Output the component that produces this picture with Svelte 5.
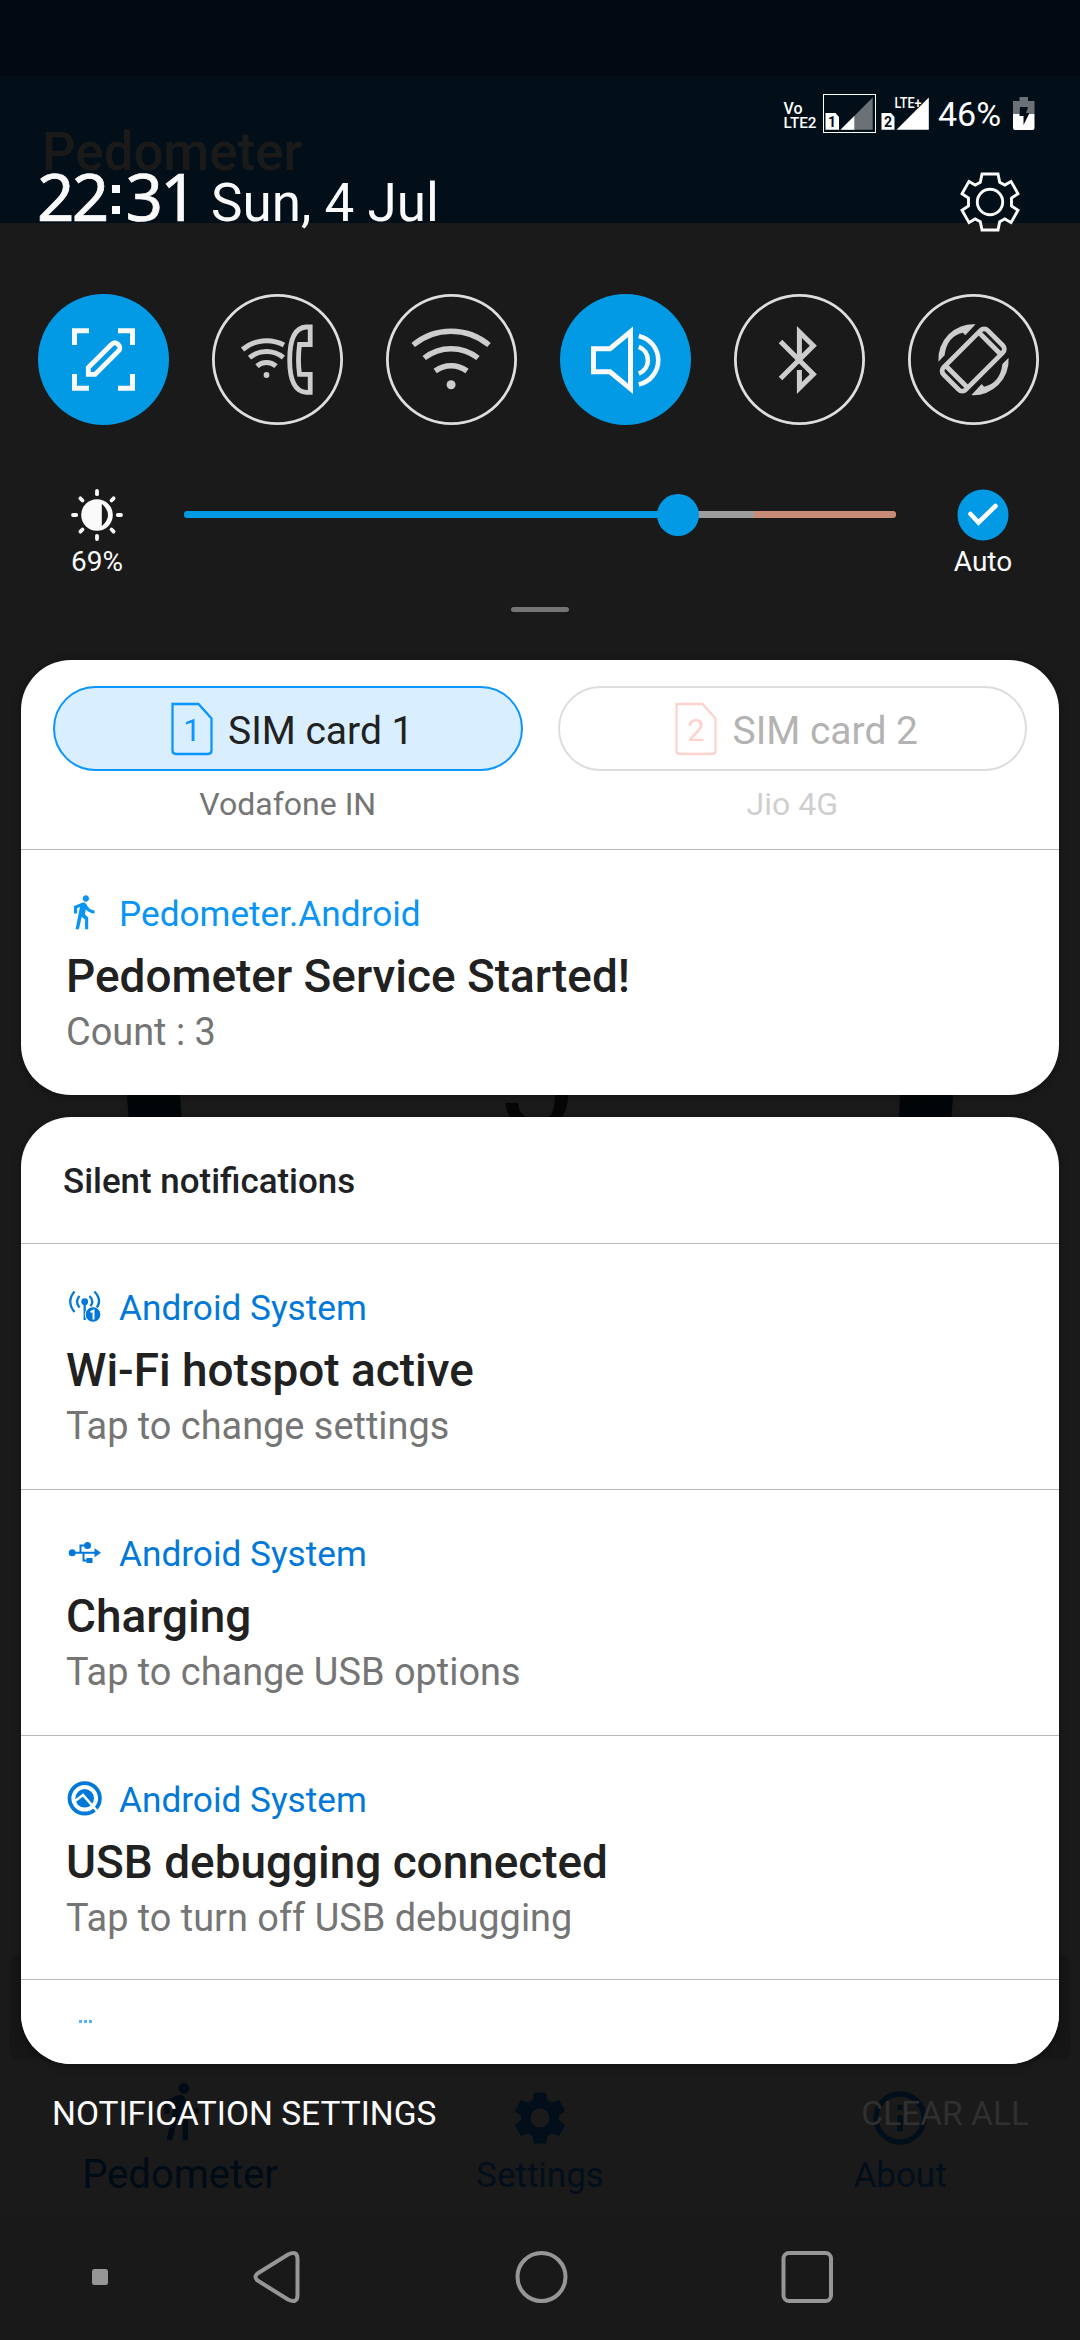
<script>
  const tiles = [
    { id: 'capture', on: true },
    { id: 'wificall', on: false },
    { id: 'wifi', on: false },
    { id: 'sound', on: true },
    { id: 'bluetooth', on: false },
    { id: 'rotate', on: false }
  ];
  const sims = [
    { n: 1, label: 'SIM card 1', carrier: 'Vodafone IN', active: true },
    { n: 2, label: 'SIM card 2', carrier: 'Jio 4G', active: false }
  ];
  const silent = [
    { icon: 'hotspot', app: 'Android System', title: 'Wi-Fi hotspot active', text: 'Tap to change settings' },
    { icon: 'usb', app: 'Android System', title: 'Charging', text: 'Tap to change USB options' },
    { icon: 'debug', app: 'Android System', title: 'USB debugging connected', text: 'Tap to turn off USB debugging' }
  ];
  const gear = 'M-8 -28H8L9.7 -19.6L14.8 -17L21 -20.6L28 -8.3L21.5 -4V4L28 8.3L21 20.6L14.8 17L9.7 19.6L8 28H-8L-9.7 19.6L-14.8 17L-21 20.6L-28 8.3L-21.5 4V-4L-28 -8.3L-21 -20.6L-14.8 -17L-9.7 -19.6Z';
</script>

{#snippet walker()}
  <path d="M13.5 5.5c1.1 0 2-.9 2-2s-.9-2-2-2-2 .9-2 2 .9 2 2 2zM9.8 8.9L7 23h2.100l1.800-8 2.100 2v6h2v-7.500l-2.100-2 .6-3C14.800 12 16.800 13 19 13v-2c-1.900 0-3.500-1-4.300-2.400l-1-1.600c-.4-.6-1-1-1.700-1-.3 0-.5.1-.8.1L6 8.300V13h2V9.600l1.800-.7" />
{/snippet}

{#snippet notification(icon, app, title, text)}
  <article class="note">
    <div class="app">
      <svg class="app-icon" viewBox="0 0 40 40" width="40" height="40">
        {#if icon === 'walk'}
          <g fill="currentColor" transform="translate(-1.500 -1) scale(1.580)">{@render walker()}</g>
        {:else if icon === 'hotspot'}
          <g fill="none" stroke="currentColor" stroke-width="2.300">
            <path d="M8.500 3.500Q0 13.500 8.500 24M13.500 8Q8.500 13.500 13.500 19.500M28.500 3.500Q37 13 29.500 21M23.500 8Q28.500 12.500 24.500 18.500" />
            <path d="M18.700 14V32" />
          </g>
          <circle cx="18.700" cy="13.700" r="3.400" fill="currentColor" />
          <circle cx="27" cy="26.500" r="7.800" fill="currentColor" stroke="#fff" stroke-width="1" />
          <path d="M24.500 24.200l3-1.500V31.500" fill="none" stroke="#fff" stroke-width="2" />
        {:else if icon === 'usb'}
          <g fill="none" stroke="currentColor" stroke-width="2">
            <path d="M6 18.700H30M14.500 18.700V11.500H22M17.500 18.700V26.500H24" />
          </g>
          <circle cx="6.200" cy="18.700" r="3.500" fill="currentColor" />
          <circle cx="21.500" cy="11.500" r="3.500" fill="currentColor" />
          <path d="M28.500 14.200V23.200L35 18.700ZM20.500 24H26.500V29H20.500Z" fill="currentColor" />
        {:else}
          <circle cx="18.700" cy="18.300" r="15.200" fill="none" stroke="currentColor" stroke-width="3.800" />
          <circle cx="18.700" cy="18.300" r="9.300" fill="currentColor" />
          <path d="M8.500 21.500L17 15L31 31" fill="none" stroke="#fff" stroke-width="2.600" />
        {/if}
      </svg>
      <span>{app}</span>
    </div>
    <h2>{title}</h2>
    <p>{text}</p>
  </article>
{/snippet}

<div class="phone">
  <div class="behind">
    <div class="b-status"></div>
    <div class="b-toolbar"><span>Pedometer</span></div>
    <svg class="b-dial" viewBox="0 0 1080 22" width="1080" height="22">
      <path d="M127 0H180L181.500 22H128.500ZM900 0H953L951.500 22H899Z" fill="#030608" />
      <path d="M505.500 8H518Q518 17 526 22H510Q505.500 16 505.500 8ZM555 0H568Q568 14 562 22H549Q555 17 555 0Z" fill="#060606" />
    </svg>
    <div class="b-snack"></div>
    <div class="b-tabs">
      <div class="b-tab current">
        <svg viewBox="0 0 24 24" width="64" height="64" fill="currentColor">{@render walker()}</svg>
        <span>Pedometer</span>
      </div>
      <div class="b-tab">
        <svg viewBox="0 0 24 24" width="64" height="64" fill="currentColor">
          <path d="M19.140 12.940c.04-.3.060-.61.060-.94s-.020-.64-.070-.94l2.030-1.580c.18-.14.230-.41.120-.61l-1.920-3.320c-.12-.22-.37-.29-.59-.22l-2.390.96c-.5-.38-1.030-.7-1.620-.94l-.36-2.540A.48.48 0 0 0 13.920 2.400h-3.840c-.24 0-.43.17-.47.41l-.36 2.540c-.59.24-1.130.57-1.620.94l-2.390-.96c-.22-.08-.47 0-.59.22L2.740 8.870c-.12.21-.8.470.12.610l2.030 1.580c-.05.3-.09.63-.09.940s.02.640.07.940l-2.030 1.580c-.18.14-.23.410-.12.610l1.920 3.320c.12.220.370.290.590.220l2.390-.96c.5.380 1.030.700 1.620.940l.36 2.540c.05.240.240.410.480.410h3.840c.240 0 .440-.170.470-.410l.360-2.540c.590-.240 1.130-.560 1.620-.940l2.390.960c.220.080.470 0 .590-.220l1.920-3.320c.120-.220.070-.470-.120-.610zM12 15.600A3.600 3.600 0 1 1 12 8.400a3.600 3.600 0 0 1 0 7.200z" />
        </svg>
        <span>Settings</span>
      </div>
      <div class="b-tab">
        <svg viewBox="0 0 24 24" width="64" height="64" fill="currentColor">
          <path d="M11 7h2v2h-2zM11 11h2v6h-2zM12 2a10 10 0 1 0 0 20 10 10 0 0 0 0-20zm0 18a8 8 0 1 1 0-16 8 8 0 0 1 0 16z" />
        </svg>
        <span>About</span>
      </div>
    </div>
  </div>

  <div class="shade">
    <div class="status">
      <svg viewBox="783 94 148 40" width="148" height="40" class="signal">
        <text x="783.500" y="113.500" font-size="16.500" textLength="19" lengthAdjust="spacingAndGlyphs">Vo</text>
        <text x="783.500" y="128" font-size="15.500" textLength="33" lengthAdjust="spacingAndGlyphs">LTE2</text>
        <rect x="823.500" y="94.500" width="52" height="38" fill="none" stroke="#fff" />
        <path d="M825.500 113H835.500L839 117V129.700H825.500Z" fill="#fff" />
        <path d="M840.500 129.700L872.700 97.500V129.700Z" fill="#6a7177" />
        <path d="M840.500 129.700L854.300 115.900V129.700Z" fill="#fff" />
        <path d="M881.500 113H891L894.500 117V129.700H881.500Z" fill="#fff" />
        <path d="M896.500 129.700L928.800 97.500V129.700Z" fill="#fff" />
        <text class="dark" x="828" y="127" font-size="14" textLength="7.500">1</text>
        <text class="dark" x="884" y="127" font-size="14" textLength="7.500">2</text>
        <text x="894.500" y="107.700" font-size="15.500" textLength="27" lengthAdjust="spacingAndGlyphs">LTE+</text>
      </svg>
      <span class="pct">46%</span>
      <svg viewBox="0 0 22 34" width="22" height="34">
        <path d="M6.500 0H15V4H21.500V17H0V4H6.500Z" fill="#6a7177" />
        <path d="M0 17H21.500V31Q21.500 33 19.500 33H2Q0 33 0 31Z" fill="#fff" />
        <path d="M7 10H15L13 16H16.500L10.500 28V19H6.500Z" fill="#020f18" />
      </svg>
    </div>

    <header>
      <div class="clock"><span class="time">22<span class="colon">:</span>31</span><span class="date">Sun, 4 Jul</span></div>
      <svg viewBox="-31 -31 62 62" width="62" height="62" fill="none" stroke="#fafafa" stroke-width="2.900">
        <path d={gear} />
        <circle r="12.700" />
      </svg>
    </header>

    <div class="tiles">
      {#each tiles as t}
        <div class="tile" class:on={t.on}>
          <svg viewBox="0 0 131 131" width="131" height="131" fill="none" stroke="currentColor" stroke-width="5">
            {#if t.id === 'capture'}
              <path d="M36.500 51V36.800H51M80 36.800H94.500V51M36.500 80V94.200H51M80 94.200H94.500V80" />
              <path d="M50.300 80.400v-6.800L73.400 50.500q3.400-3.400 6.800 0t0 6.800L57.100 80.400z" stroke-width="4.800" />
            {:else if t.id === 'wificall'}
              <path d="M30.500 55.500A37.500 37.500 0 0 1 72 51M37.500 63.600A27 27 0 0 1 71.400 63.600M45 72.200A14 14 0 0 1 64 72.200" />
              <path d="M98.200 33V50.500H87.500Q85.500 66 87.500 80.300H98.200V98.300H94Q77.700 97 77.700 66Q77.700 34 94 33z" stroke-width="4.800" />
              <circle cx="54.500" cy="81" r="2.900" fill="currentColor" stroke="none" />
            {:else if t.id === 'wifi'}
              <path d="M27.200 51A59 59 0 0 1 103 51M38.200 64A43.500 43.500 0 0 1 92 64M49.200 77A26.500 26.500 0 0 1 81 77" stroke-width="5.400" />
              <circle cx="65.100" cy="90.700" r="4.500" fill="currentColor" stroke="none" />
            {:else if t.id === 'sound'}
              <path d="M33.500 54.700H50L70.500 37.800V94.800L50 77.800H33.500z" />
              <path d="M78.800 52.800A14.400 14.400 0 0 1 78.800 79.600M78.800 41.900A24.900 24.900 0 0 1 78.800 90.500" stroke-width="4.600" />
            {:else if t.id === 'bluetooth'}
              <path d="M46.500 84.500L79.300 51.700L65.400 38V66M46.500 47.500L79.300 80.300L65.400 94V76" />
            {:else}
              <g transform="translate(65.200 66) rotate(45)" stroke-width="4.800">
                <rect x="-15.700" y="-31.200" width="31.400" height="62.400" rx="5" />
                <path d="M-15.700 -23.500H15.700M-15.700 23.500H15.700" />
              </g>
              <g fill="currentColor" stroke="none">
                <path d="M30.400 67.700A35 35 0 0 1 67.600 30.300L57.300 41.300L54.900 38.700Q39 42 36.600 61.300Z" />
                <path d="M30.400 67.700A35 35 0 0 1 67.600 30.300L57.300 41.300L54.900 38.700Q39 42 36.600 61.300Z" transform="rotate(180 65.500 65.700)" />
              </g>
            {/if}
          </svg>
        </div>
      {/each}
    </div>

    <div class="brightness">
      <div class="end">
        <svg viewBox="-28 -28 56 56" width="56" height="56" fill="#fafafa">
          <circle r="15.800" />
          <path d="M4.800 -11.200Q17.200 0 4.800 11.200Z" fill="#1a1a1a" />
          <g stroke="#fafafa" stroke-width="3.800" stroke-linecap="round">
            {#each [0, 90, 180, 270] as a}<path d="M0 -20.800V-24" transform="rotate({a})" />{/each}
            {#each [45, 135, 225, 315] as a}<path d="M0 -20.500V-23.500" transform="rotate({a})" />{/each}
          </g>
        </svg>
        <span>69%</span>
      </div>
      <div class="track">
        <i class="fill"></i><i class="rest"></i><i class="hot"></i>
        <b class="thumb"></b>
      </div>
      <div class="end">
        <svg viewBox="-28 -28 56 56" width="56" height="56">
          <circle r="25.500" fill="#029ae4" />
          <path d="M-12.500 -1L-4.500 7.500L12.500 -9" fill="none" stroke="#fff" stroke-width="4.600" stroke-linecap="round" />
        </svg>
        <span>Auto</span>
      </div>
    </div>
    <div class="handle"></div>

    <section class="card first">
      <div class="sims">
        {#each sims as s}
          <div class="sim" class:active={s.active}>
            <div class="pill">
              <svg viewBox="0 0 42 54" width="42" height="54">
                <path d="M1.500 2H27.500L40.500 16.500V48.500Q40.500 52 37 52H5Q1.500 52 1.500 48.500Z" fill="none" stroke="currentColor" stroke-width="2.300" />
                <text x="21" y="38.500" text-anchor="middle" font-size="31" fill="currentColor">{s.n}</text>
              </svg>
              <span>{s.label}</span>
            </div>
            <div class="carrier">{s.carrier}</div>
          </div>
        {/each}
      </div>
      {@render notification('walk', 'Pedometer.Android', 'Pedometer Service Started!', 'Count : 3')}
    </section>

    <section class="card second">
      <h3>Silent notifications</h3>
      {#each silent as n}
        {@render notification(n.icon, n.app, n.title, n.text)}
      {/each}
      <div class="more"><i></i><i></i><i></i></div>
    </section>

    <div class="actions"><span>NOTIFICATION SETTINGS</span><span class="clear">CLEAR ALL</span></div>

    <nav>
      <svg viewBox="0 0 1080 126" width="1080" height="126" fill="none" stroke="#969696" stroke-width="4">
        <rect x="92" y="55" width="16" height="16" rx="2.500" fill="#969696" stroke="none" />
        <path d="M257.500 59.500L288 40.500Q297.500 36 297.500 45V81Q297.500 90 288 85.500L257.500 66.500Q253.500 63 257.500 59.500Z" />
        <circle cx="541.500" cy="63" r="24" />
        <rect x="783.500" y="39" width="47.500" height="48" rx="5.500" />
      </svg>
    </nav>
  </div>
</div>

<style>
  :global(body) { background: #1a1a1a; }
  .phone { position: relative; width: 1080px; height: 2340px; overflow: hidden; background: #1a1a1a; font-family: Roboto, sans-serif; }
  svg { display: block; flex: none; }
  h2, h3, p { margin: 0; }

  .behind { position: absolute; inset: 0; color: #020f1a; }
  .b-status { height: 76px; background: #020912; }
  .b-toolbar { height: 147px; box-sizing: border-box; padding: 39px 0 0 42px; background: #020f18; color: #1a1a1a; font-size: 52.800px; line-height: 74px; font-weight: 500; }
  .b-dial { margin-top: 872px; }
  .b-snack { height: 104px; margin: 838px 9px 0; border-radius: 10px; background: #161616; }
  .b-tabs { display: flex; margin-top: 27px; }
  .b-tab { width: 360px; height: 127px; display: flex; flex-direction: column; align-items: center; font-size: 35px; line-height: 40px; }
  .b-tab span { margin-top: 6px; }
  .b-tab.current { color: #010b15; font-size: 40px; }
  .b-tab.current svg { margin-top: -7px; }
  .b-tab.current span { margin-top: 12px; }

  .shade { position: relative; display: flex; flex-direction: column; }
  .status { display: flex; justify-content: flex-end; align-items: center; height: 40px; padding: 94px 45px 0 0; color: #fff; }
  .signal text { fill: #fff; font-weight: 500; }
  .signal .dark { fill: #020f18; font-weight: 700; }
  .pct { width: 82px; padding-left: 7px; box-sizing: border-box; font-size: 34px; line-height: 41px; }

  header { display: flex; justify-content: space-between; height: 160px; box-sizing: border-box; padding: 0 59px 0 37px; color: #fafafa; }
  header > svg { margin-top: 37px; }
  .clock { display: flex; align-items: baseline; padding-top: 22px; }
  .time { width: 174px; font-family: 'Noto Sans', sans-serif; font-size: 65.500px; line-height: 80px; font-weight: 400; -webkit-text-stroke: .7px #fafafa; letter-spacing: -2.700px; white-space: nowrap; }
  .colon { font: 700 57px/20px 'Liberation Sans', sans-serif; letter-spacing: 0; vertical-align: 7px; -webkit-text-stroke: 0; }
  .date { font-size: 53px; line-height: 60px; }

  .tiles { display: flex; gap: 43px; padding-left: 38px; }
  .tile { width: 131px; height: 131px; box-sizing: border-box; border-radius: 50%; color: #cdcdcd; box-shadow: inset 0 0 0 2.800px #dedede; }
  .tile.on { background: #029ae4; color: #fafafa; box-shadow: none; }

  .brightness { display: flex; padding: 62px 47px 0; }
  .end { width: 100px; display: flex; flex-direction: column; align-items: center; color: #fafafa; font-size: 28px; line-height: 32px; }
  .end span { margin-top: 3px; }
  .track { position: relative; flex: 1; display: flex; height: 7px; margin: 24px 37px 0; border-radius: 3px; }
  .track i { height: 7px; }
  .fill { width: 494px; background: #029ae4; border-radius: 3px 0 0 3px; }
  .rest { width: 76px; background: #9e9e9e; }
  .hot { flex: 1; background: #c98b78; border-radius: 0 3px 3px 0; }
  .thumb { position: absolute; left: 473px; top: -17px; width: 42px; height: 42px; border-radius: 50%; background: #029ae4; }
  .handle { width: 58px; height: 5px; margin: 29px auto 0; border-radius: 3px; background: #757575; }

  .card { margin: 0 21px; box-sizing: border-box; border-radius: 50px; background: #fff; overflow: hidden; box-shadow: 0 2px 10px rgba(0, 0, 0, .35); }
  .first { height: 435px; margin-top: 48px; }
  .second { height: 947px; margin-top: 22px; }
  .sims { display: flex; gap: 35px; height: 189px; box-sizing: border-box; padding: 26px 32px 0; }
  .sim { flex: 1; color: #ffd3cd; }
  .pill { display: flex; justify-content: center; align-items: center; gap: 15px; height: 85px; box-sizing: border-box; padding-left: 9px; border: 2px solid #ddd; border-radius: 43px; }
  .pill span { color: #b3b3b3; font-size: 39px; line-height: 46px; padding-top: 4px; }
  .carrier { margin-top: 13px; text-align: center; color: #cfcfcf; font-size: 32px; line-height: 40px; }
  .active { color: #0a95ff; }
  .active .pill { border-color: #0a95ff; background: #d9eeff; }
  .active .pill span { color: #212121; }
  .active .carrier { color: #757575; }

  .note { height: 246px; box-sizing: border-box; border-top: 1px solid #b9b9b9; padding: 42px 0 0 45px; }
  .app { display: flex; color: #0279d8; font-size: 35.200px; line-height: 44px; }
  .first .app { color: #0a95f5; }
  .app-icon { margin: 2px 13px 0 0; }
  h2 { margin-top: 10px; color: #212121; font-size: 45.900px; line-height: 60px; font-weight: 500; }
  p { margin-top: 1px; color: #757575; font-size: 37.900px; line-height: 50px; }
  h3 { height: 126px; box-sizing: border-box; padding: 43px 0 0 42px; color: #202124; font-size: 34.900px; line-height: 44px; font-weight: 500; }
  .more { display: flex; gap: 2px; height: 86px; box-sizing: border-box; margin-top: -2px; padding: 40px 0 0 58px; border-top: 1px solid #b9b9b9; background: #fff; position: relative; }
  .more i { width: 3px; height: 3px; background: #55b3fa; }

  .actions { display: flex; justify-content: space-between; height: 150px; box-sizing: border-box; padding: 30px 51px 0 52px; color: #fafafa; font-size: 33.500px; line-height: 40px; }
  .clear { color: #303030; }
  nav { height: 126px; background: #191919; }
</style>
